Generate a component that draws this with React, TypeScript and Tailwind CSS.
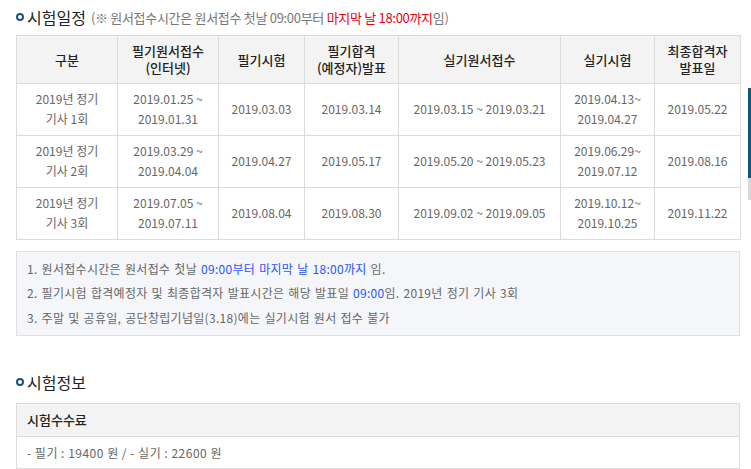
const font = { fontFamily: '"Noto Sans CJK KR", "Noto Sans", sans-serif' };

const heads: string[][] = [
  ["구분"],
  ["필기원서접수", "(인터넷)"],
  ["필기시험"],
  ["필기합격", "(예정자)발표"],
  ["실기원서접수"],
  ["실기시험"],
  ["최종합격자", "발표일"],
];

const rows: string[][][] = [
  [["2019년 정기", "기사 1회"], ["2019.01.25 ~", "2019.01.31"], ["2019.03.03"], ["2019.03.14"], ["2019.03.15 ~ 2019.03.21"], ["2019.04.13~", "2019.04.27"], ["2019.05.22"]],
  [["2019년 정기", "기사 2회"], ["2019.03.29 ~", "2019.04.04"], ["2019.04.27"], ["2019.05.17"], ["2019.05.20 ~ 2019.05.23"], ["2019.06.29~", "2019.07.12"], ["2019.08.16"]],
  [["2019년 정기", "기사 3회"], ["2019.07.05 ~", "2019.07.11"], ["2019.08.04"], ["2019.08.30"], ["2019.09.02 ~ 2019.09.05"], ["2019.10.12~", "2019.10.25"], ["2019.11.22"]],
];

const colWidths = ["w-[101px]", "w-[101px]", "w-[86px]", "w-[94px]", "w-[162px]", "w-[94px]", "w-[86px]"];

function Bullet() {
  return <span className="inline-block w-[8px] h-[8px] rounded-full border-[2px] border-[#1b4f86] bg-white mr-[3px]" />;
}

export default function App() {
  return (
    <div className="flex bg-white w-[751px] h-[469px] overflow-hidden text-[#666]" style={font}>
      <div className="ml-[16px] w-[724px] flex flex-col">
        <div className="h-[35px] flex items-center">
          <Bullet />
          <span className="text-[16px] text-[#222] leading-none">시험일정</span>
          <span className="text-[13px] text-[#777] ml-[5px] tracking-[-0.3px]">
            (※ 원서접수시간은 원서접수 첫날 09:00부터 <span className="text-[#e60012]">마지막 날 18:00까지</span>임)
          </span>
        </div>

        <table className="border-collapse table-fixed w-[724px] text-[12px]">
          <thead>
            <tr className="h-[48px] bg-[#f3f3f3]">
              {heads.map((h, i) => (
                <th key={i} className={`${colWidths[i]} border border-[#dcdcdc] font-medium text-[#222] text-[13px] leading-[17px] text-center align-middle`}>
                  {h.map((l, j) => <div key={j}>{l}</div>)}
                </th>
              ))}
            </tr>
          </thead>
          <tbody>
            {rows.map((r, i) => (
              <tr key={i} className="h-[52px]">
                {r.map((c, j) => (
                  <td key={j} className="border border-[#dcdcdc] text-center align-middle leading-[20px] text-[#666]">
                    {c.map((l, k) => <div key={k}>{l}</div>)}
                  </td>
                ))}
              </tr>
            ))}
          </tbody>
        </table>

        <div className="mt-[11px] h-[86px] bg-[#f5f6fa] border border-[#e0e0e0] pl-[10px] pt-[5px] text-[12px] leading-[24.5px] text-[#666] tracking-[0.3px] [word-spacing:1px]">
          <p>1. 원서접수시간은 원서접수 첫날 <span className="text-[#1f55ff]">09:00부터 마지막 날 18:00까지</span> 임.</p>
          <p>2. 필기시험 합격예정자 및 최종합격자 발표시간은 해당 발표일 <span className="text-[#1f55ff]">09:00</span>임. 2019년 정기 기사 3회</p>
          <p>3. 주말 및 공휴일, 공단창립기념일(3.18)에는 실기시험 원서 접수 불가</p>
        </div>

        <div className="mt-[35px] h-[22px] flex items-center">
          <Bullet />
          <span className="text-[16px] text-[#222] leading-none">시험정보</span>
        </div>

        <div className="mt-[10px] border border-[#dcdcdc]">
          <div className="h-[33px] bg-[#f3f3f3] border-b border-[#dcdcdc] flex items-center pl-[10px] text-[13px] font-medium text-[#222]">
            시험수수료
          </div>
          <div className="h-[31px] flex items-center pl-[10px] text-[12px] text-[#666] tracking-[0.5px]">
            - 필기 : 19400 원 / - 실기 : 22600 원
          </div>
        </div>
      </div>

      <div className="ml-[8px] mt-[88px] w-[3px] flex flex-col">
        <div className="h-[90px] bg-[#0b5a7c]" />
        <div className="h-[22px] bg-[#d8d8d8]" />
      </div>
    </div>
  );
}
